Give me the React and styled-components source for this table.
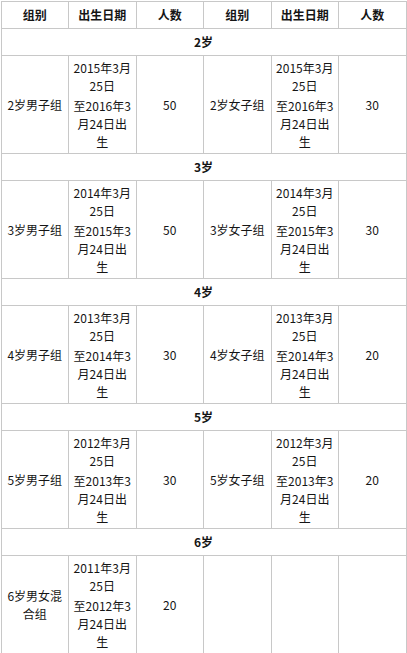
import React from 'react';
import styled, { createGlobalStyle } from 'styled-components';

const GlobalStyle = createGlobalStyle`
  body {
    margin: 0;
    background: #fff;
    font-family: "Noto Sans CJK SC", "Noto Sans", sans-serif;
    color: #151515;
  }
`;

const Table = styled.table`
  width: 406px;
  margin-left: 0.5px;
  margin-top: 0.5px;
  border-collapse: collapse;
  table-layout: fixed;
  font-size: 12px;
  line-height: 18px;
`;

const HeadCell = styled.th`
  border: 1px solid #c8c8c8;
  padding: 4px 4px;
  font-weight: bold;
  text-align: center;
`;

const SectionCell = styled.td`
  border: 1px solid #c8c8c8;
  padding: 4px 4px;
  font-weight: bold;
  text-align: center;
`;

const Cell = styled.td`
  border: 1px solid #c8c8c8;
  padding: 3px 4px 2px;
  height: 92px;
  text-align: center;
  vertical-align: middle;
  word-break: break-all;
`;

const DateLine = styled.p`
  margin: 0;
  & + & {
    margin-top: 2px;
  }
`;

const groups = [
  { age: 2, from: ['2015', '2016'], boys: 50, girls: 30 },
  { age: 3, from: ['2014', '2015'], boys: 50, girls: 30 },
  { age: 4, from: ['2013', '2014'], boys: 30, girls: 20 },
  { age: 5, from: ['2012', '2013'], boys: 30, girls: 20 },
];

const DateRange = ({ years }) => (
  <>
    <DateLine>{years[0]}年3月25日</DateLine>
    <DateLine>至{years[1]}年3月24日出生</DateLine>
  </>
);

const App = () => {
  return (
    <>
      <GlobalStyle />
      <Table>
        <thead>
          <tr>
            <HeadCell>组别</HeadCell>
            <HeadCell>出生日期</HeadCell>
            <HeadCell>人数</HeadCell>
            <HeadCell>组别</HeadCell>
            <HeadCell>出生日期</HeadCell>
            <HeadCell>人数</HeadCell>
          </tr>
        </thead>
        <tbody>
          {groups.map((g) => (
            <React.Fragment key={g.age}>
              <tr>
                <SectionCell colSpan={6}>{g.age}岁</SectionCell>
              </tr>
              <tr>
                <Cell>{g.age}岁男子组</Cell>
                <Cell><DateRange years={g.from} /></Cell>
                <Cell>{g.boys}</Cell>
                <Cell>{g.age}岁女子组</Cell>
                <Cell><DateRange years={g.from} /></Cell>
                <Cell>{g.girls}</Cell>
              </tr>
            </React.Fragment>
          ))}
          <tr>
            <SectionCell colSpan={6}>6岁</SectionCell>
          </tr>
          <tr>
            <Cell>6岁男女混合组</Cell>
            <Cell><DateRange years={['2011', '2012']} /></Cell>
            <Cell>20</Cell>
            <Cell />
            <Cell />
            <Cell />
          </tr>
        </tbody>
      </Table>
    </>
  );
};

export default App;
